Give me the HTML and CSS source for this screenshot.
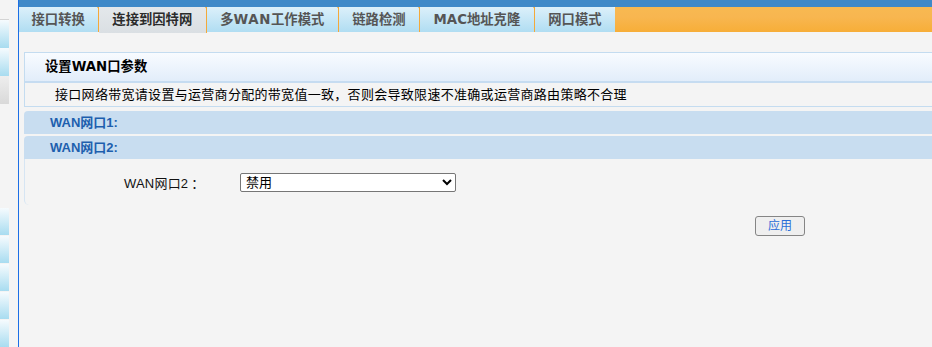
FILE: index.html
```html
<!DOCTYPE html>
<html lang="zh-CN">
<head>
<meta charset="utf-8">
<title>连接到因特网</title>
<link rel="stylesheet" href="styles.css">
</head>
<body>
<div class="page">
  <aside class="side">
    <div class="side-top"></div>
    <div class="side-group">
      <div class="side-item"></div>
      <div class="side-item"></div>
      <div class="side-item grey"></div>
    </div>
    <div class="side-group lower">
      <div class="side-item"></div>
      <div class="side-item"></div>
      <div class="side-item"></div>
      <div class="side-item"></div>
      <div class="side-item"></div>
    </div>
  </aside>
  <main class="main">
    <div class="topbar"></div>
    <nav class="tabs">
      <span class="tab">接口转换</span>
      <span class="tab active">连接到因特网</span>
      <span class="tab">多<span class="lat wide">WAN</span>工作模式</span>
      <span class="tab">链路检测</span>
      <span class="tab"><span class="lat">MAC</span>地址克隆</span>
      <span class="tab last">网口模式</span>
      <span class="tab-fill"></span>
    </nav>
    <section class="panel">
      <div class="panel-head">设置<span class="lat">WAN</span>口参数</div>
      <div class="panel-desc">接口网络带宽请设置与运营商分配的带宽值一致，否则会导致限速不准确或运营商路由策略不合理</div>
      <div class="wan-row first">WAN网口1:</div>
      <div class="wan-row">WAN网口2:</div>
      <div class="panel-body">
        <label class="field-label" for="wan2">WAN网口2<span class="colon">：</span></label>
        <select id="wan2" class="field-select">
          <option>禁用</option>
        </select>
      </div>
    </section>
    <div class="actions">
      <button class="apply" type="button">应用</button>
    </div>
  </main>
</div>
</body>
</html>
```

FILE: styles.css
```css
* { box-sizing: border-box; }
html, body { margin: 0; padding: 0; }
body {
  background: #f4f4f4;
  font-family: "Liberation Sans", "Noto Sans CJK SC", sans-serif;
  font-size: 13px;
  color: #000;
  width: 932px;
  height: 347px;
  overflow: hidden;
}
.page {
  display: flex;
  height: 347px;
}
.side {
  width: 19px;
  flex: none;
  border-right: 1px solid #1c6fe6;
  background: #f4f4f4;
  display: flex;
  flex-direction: column;
}
.side-top {
  height: 7px;
}
.side-group {
  margin-top: 16px;
  width: 9px;
  border-top: 1px solid #d4d4d4;
  display: flex;
  flex-direction: column;
}
.side-group.lower {
  margin-top: 104px;
  border-top: none;
  gap: 1px;
}
.side-item {
  height: 27px;
  background: linear-gradient(#f6fbfe, #a8dcf0);
}
.side-group:not(.lower) .side-item { height: 28px; }
.side-item.grey {
  background: linear-gradient(#eeeeee, #d9d9d9);
}
.main {
  flex: 1;
  min-width: 0;
}
.topbar {
  height: 7px;
  background: #3f89c8;
}
.tabs {
  display: flex;
  height: 26px;
}
.lat {
  font-family: "DejaVu Sans", sans-serif;
}
.tab .lat.wide { letter-spacing: 0.6px; }
.tab {
  position: relative;
  padding: 0 13.5px;
  height: 25px;
  line-height: 25px;
  font-size: 13.33px;
  font-weight: 700;
  color: #555;
  white-space: nowrap;
  background: linear-gradient(#dcf0fa, #b0ddf2);
  border-right: 1px solid #f3a93a;
}
.tab:first-child { padding: 0 13px 0 12.5px; }
.tab::before {
  content: "";
  position: absolute;
  right: -3px;
  top: 0;
  border-left: 2.5px solid transparent;
  border-right: 2.5px solid transparent;
  border-top: 3px solid #f3a93a;
}
.tab.last { border-right: none; border-top-right-radius: 3px; }
.tab.last::before { display: none; }
.tab.active {
  color: #2b2b2b;
  height: 26px;
  background: linear-gradient(#e4e8eb, #dadfe3);
}
.tab-fill {
  flex: 1;
  height: 25px;
  background: linear-gradient(#f8b951 0%, #f8b650 40%, #f7ae38 100%);
}
.panel {
  margin: 19px 0 0 5px;
}
.panel-head {
  height: 31px;
  line-height: 28px;
  padding-left: 20px;
  font-size: 13.33px;
  font-weight: 700;
  border-top: 1px solid #c4dcf0;
  border-left: 1px solid #c4dcf0;
  border-bottom: 2px solid #c6dcf1;
  background: linear-gradient(#f8fbff, #e2edfa);
}
.panel-desc {
  height: 24px;
  line-height: 23px;
  padding-left: 30px;
  letter-spacing: 0.3px;
  border-left: 1px solid #c4dcf0;
  border-bottom: 1px solid #c4dcf0;
}
.wan-row {
  height: 23px;
  line-height: 24px;
  margin-top: 2px;
  padding-left: 26px;
  font-weight: 700;
  color: #1d5fae;
  background: #c8ddf0;
  border-top-left-radius: 4px;
}
.wan-row.first { margin-top: 4px; }
.panel-body {
  height: 46px;
  display: flex;
  align-items: center;
  border-left: 1px solid #d6e5f3;
  border-bottom-left-radius: 5px;
  padding-left: 99px;
}
.field-label {
  width: 116px;
  flex: none;
  font-size: 13px;
  color: #111;
  letter-spacing: 0.2px;
}
.colon {
  font-family: "Noto Sans CJK JP", sans-serif;
  letter-spacing: 0;
  margin-left: 3px;
}
.field-select {
  width: 216px;
  height: 19px;
  font-family: "Liberation Sans", "Noto Sans CJK SC", sans-serif;
  font-size: 13px;
  padding: 0 0 0 1px;
  margin-top: 1px;
  border: 1px solid #767676;
  border-radius: 2px;
  background: #fff;
  color: #000;
}
.actions {
  padding: 11px 0 0 736px;
}
.apply {
  width: 50px;
  height: 20px;
  padding: 0;
  font-family: "Liberation Sans", "Noto Sans CJK SC", sans-serif;
  font-size: 12px;
  line-height: 17px;
  color: #2a6dd8;
  background: #efefef;
  border: 1px solid #858585;
  border-radius: 3px;
}
```
